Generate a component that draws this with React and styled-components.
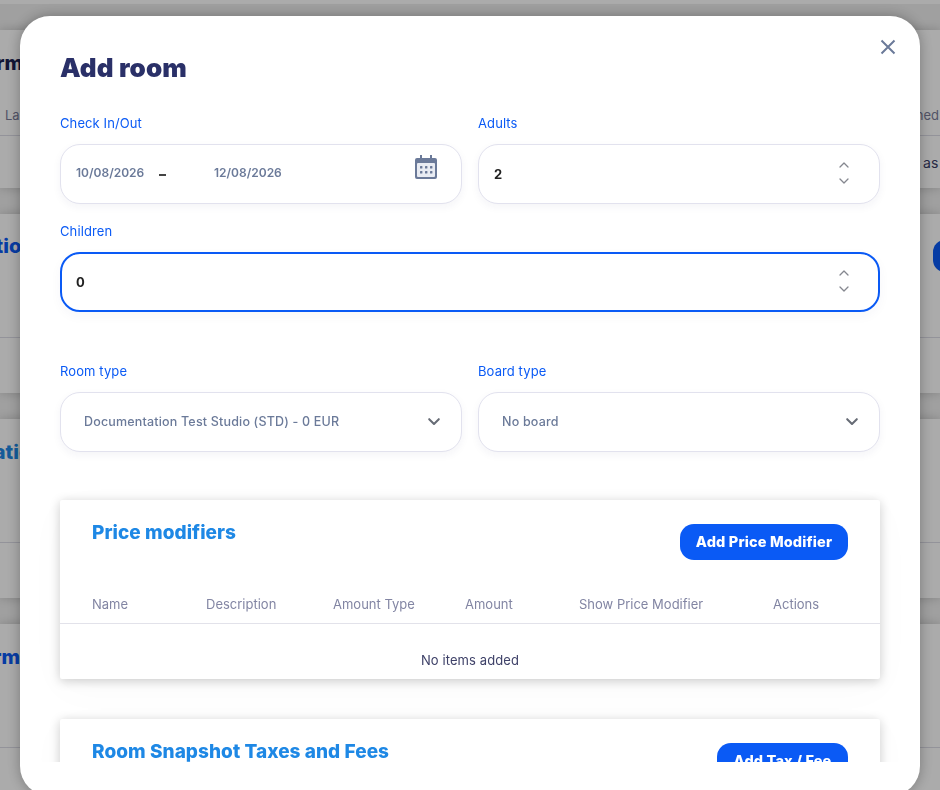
import React from "react";
import styled, { createGlobalStyle } from "styled-components";

const Global = createGlobalStyle`
  html, body { margin: 0; padding: 0; height: 100%; overflow: hidden; background: #efefef; }
  body { font-family: Inter, "Noto Sans", "Liberation Sans", sans-serif; }
  * { box-sizing: border-box; }
`;

const Page = styled.div`
  height: 790px;
  overflow: hidden;
  padding-top: 4px;
  display: flex;
  flex-direction: column;
  gap: 26px;
  box-shadow: inset 0 4px 0 #fff;
`;
const BackCard = styled.section`
  flex: none;
  height: ${p => p.$h}px;
  background: #fff;
  box-shadow: 0 0 10px rgba(0,0,0,.2);
  &:first-child { margin-top: 26px; }
`;
const BackHead = styled.div`
  height: ${p => p.$h}px;
  border-bottom: 1px solid #dcdce6;
  display: flex;
  justify-content: space-between;
  position: relative;
`;
const BackLeft = styled.div`
  width: ${p => p.$w}px;
  display: flex;
  flex-direction: column;
  align-items: flex-end;
  padding-top: ${p => p.$top}px;
`;
const BackTitle = styled.div`
  font-size: 20px;
  line-height: 24px;
  font-weight: 800;
  white-space: nowrap;
  color: ${p => p.$c};
`;
const BackCol = styled.div`
  position: absolute;
  top: 77px;
  left: 5px;
  font-size: 13px;
  line-height: 16px;
  color: #7a7c99;
  white-space: nowrap;
`;
const BackColRight = styled(BackCol)`
  left: 882px;
`;
const BackCell = styled.div`
  padding: 18px 0 0 874px;
  font-size: 14px;
  line-height: 18px;
  color: #3a3d66;
  white-space: nowrap;
  overflow: hidden;
`;
const BackButton = styled.div`
  position: absolute;
  left: 933px;
  top: 26px;
  width: 60px;
  height: 32px;
  border-radius: 12px;
  background: #0a5af5;
`;

const Backdrop = styled.div`
  position: fixed;
  inset: 0;
  background: rgba(0,0,0,.33);
`;
const Modal = styled.div`
  position: fixed;
  left: 20px;
  top: 16px;
  width: 900px;
  height: 780px;
  background: #fff;
  border-radius: 30px;
  box-shadow: 0 0 14px rgba(0,0,0,.3);
  padding-top: 37px;
`;
const Heading = styled.h2`
  margin: 0 0 32px 40px;
  font-size: 26px;
  line-height: 30px;
  font-weight: 900;
  letter-spacing: .15px;
  color: #2a3068;
`;
const CloseButton = styled.button`
  position: absolute;
  right: 24px;
  top: 23px;
  width: 16px;
  height: 16px;
  padding: 0;
  border: 0;
  background: none;
  display: flex;
`;
const Scroll = styled.div`
  height: 647px;
  overflow: hidden;
  padding: 0 40px;
`;
const Row = styled.div`
  display: grid;
  grid-template-columns: 1fr 1fr;
  gap: 16px;
  margin-top: ${p => p.$top || 0}px;
`;
const Field = styled.div`
  grid-column: ${p => (p.$full ? "1 / -1" : "auto")};
`;
const Label = styled.div`
  font-size: 13px;
  line-height: 16px;
  font-weight: 400;
  letter-spacing: .1px;
  color: #0a5af5;
  margin-bottom: 13px;
`;
const Control = styled.div`
  height: 60px;
  border-radius: 20px;
  background: #fff;
  border: ${p => (p.$focus ? "2px solid #0a5af5" : "1px solid #e2e2ee")};
  box-shadow: ${p => (p.$focus ? "0 4px 12px rgba(40,40,90,.04)" : "0 3px 8px rgba(40,40,90,.05)")};
  padding: 0 ${p => p.$pr ?? 20}px 0 ${p => (p.$focus ? p.$pl - 1 : p.$pl)}px;
  display: flex;
  align-items: center;
  justify-content: space-between;
`;
const NumberValue = styled.span`
  font-size: 13px;
  font-weight: 700;
  color: #222;
`;
const Spinner = styled.div`
  display: flex;
  flex-direction: column;
  gap: 10px;
  margin-top: -2px;
  color: #85878f;
`;
const DateGroup = styled.div`
  display: flex;
  align-items: center;
  margin-top: -3px;
`;
const DateText = styled.span`
  font-size: 12px;
  font-weight: 600;
  color: #6b7a99;
  width: ${p => p.$w}px;
`;
const Dash = styled.span`
  width: 7px;
  height: 2px;
  margin: 5px 48px 0 15px;
  background: #444;
`;
const SelectText = styled.span`
  font-size: 12.5px;
  font-weight: 500;
  letter-spacing: .18px;
  color: #6b7a99;
  margin-top: -2px;
`;
const Panel = styled.section`
  background: #fff;
  border-radius: 2px;
  margin-top: ${p => p.$top}px;
  box-shadow: 0 2px 11px rgba(0,0,0,.2), 0 10px 44px rgba(0,0,0,.025);
`;
const PanelHead = styled.div`
  display: flex;
  justify-content: space-between;
  align-items: flex-start;
  padding: 24px 32px 0;
`;
const PanelTitle = styled.h3`
  margin: 0;
  font-size: 19px;
  line-height: 18px;
  font-weight: 800;
  letter-spacing: .05px;
  color: #1e88e5;
`;
const AddButton = styled.button`
  height: 36px;
  width: ${p => p.$w}px;
  border: 0;
  border-radius: 14px;
  background: #0a5af5;
  color: #fff;
  font: 800 14.5px/36px Inter, sans-serif;
  letter-spacing: .15px;
  padding: 0;
  white-space: nowrap;
`;
const Columns = styled.div`
  display: grid;
  grid-template-columns: 114px 127px 132px 114px 194px 1fr;
  padding: 36px 32px 11px;
  border-bottom: 1px solid #e2e2ea;
  font-size: 13px;
  line-height: 16px;
  color: #8285a3;
`;
const Empty = styled.div`
  padding: 28px 0 11px;
  text-align: center;
  font-size: 13px;
  line-height: 16px;
  letter-spacing: .1px;
  color: #3e4168;
`;
const SelectArrow = styled.span`
  color: #666b75;
  display: flex;
`;

const Chevron = ({ up, w = 10, sw = 1.3 }) => (
  <svg width={w} height={w * 0.6} viewBox="0 0 10 6" fill="none" stroke="currentColor" strokeWidth={sw} strokeLinecap="round" strokeLinejoin="round" style={{ display: "block", overflow: "visible" }}>
    <path d={up ? "M1 5 5 1 9 5" : "M1 1 5 5 9 1"} />
  </svg>
);

const Arrows = () => (
  <Spinner>
    <Chevron up />
    <Chevron />
  </Spinner>
);

const Calendar = () => (
  <svg width="22" height="24" viewBox="0 0 22 24" style={{ display: "block", marginTop: -14 }}>
    <path d="M5 0h2v3h8V0h2v3h3a2 2 0 0 1 2 2v17a2 2 0 0 1-2 2H2a2 2 0 0 1-2-2V5a2 2 0 0 1 2-2h3z" fill="#6b7a99" />
    <rect x="2" y="8" width="18" height="14" rx="1" fill="#e9ecf3" />
    {[5, 10, 15].map(x => [11, 16].map(y => <rect key={x + "-" + y} x={x} y={y} width="2.4" height="2.4" rx=".5" fill="#6b7a99" />))}
  </svg>
);

export default function App() {
  return (
    <>
      <Global />
      <Page>
        <BackCard $h={158}>
          <BackHead $h={106}>
            <BackLeft $w={23} $top={21}><BackTitle $c="#1c2150">Confirm</BackTitle></BackLeft>
            <BackCol>Last</BackCol>
            <BackColRight>Assigned</BackColRight>
          </BackHead>
          <BackCell>Shown as</BackCell>
        </BackCard>
        <BackCard $h={179}>
          <BackHead $h={124}>
            <BackLeft $w={34} $top={20}><BackTitle $c="#0a5af5">Relation</BackTitle></BackLeft>
            <BackButton />
          </BackHead>
        </BackCard>
        <BackCard $h={179}>
          <BackHead $h={124}>
            <BackLeft $w={44} $top={21}><BackTitle $c="#1e88e5">Relation</BackTitle></BackLeft>
          </BackHead>
        </BackCard>
        <BackCard $h={179}>
          <BackHead $h={124}>
            <BackLeft $w={20} $top={21}><BackTitle $c="#0a5af5">Confirm</BackTitle></BackLeft>
          </BackHead>
        </BackCard>
      </Page>
      <Backdrop />
      <Modal>
        <CloseButton aria-label="Close">
          <svg width="16" height="16" viewBox="0 0 16 16" fill="none" stroke="#6b7a99" strokeWidth="2">
            <path d="M1.5 1.5 14.5 14.5M14.5 1.5 1.5 14.5" />
          </svg>
        </CloseButton>
        <Heading>Add room</Heading>
        <Scroll>
          <Row>
            <Field>
              <Label>Check In/Out</Label>
              <Control $pl={15} $pr={24}>
                <DateGroup>
                  <DateText $w={68}>10/08/2026</DateText>
                  <Dash />
                  <DateText $w={68}>12/08/2026</DateText>
                </DateGroup>
                <Calendar />
              </Control>
            </Field>
            <Field>
              <Label>Adults</Label>
              <Control $pl={15} $pr={30}>
                <NumberValue>2</NumberValue>
                <Arrows />
              </Control>
            </Field>
          </Row>
          <Row $top={19}>
            <Field $full>
              <Label>Children</Label>
              <Control $focus $pl={15} $pr={29}>
                <NumberValue>0</NumberValue>
                <Arrows />
              </Control>
            </Field>
          </Row>
          <Row $top={51}>
            <Field>
              <Label>Room type</Label>
              <Control $pl={23} $pr={21}>
                <SelectText>Documentation Test Studio (STD) - 0 EUR</SelectText>
                <SelectArrow><Chevron w={12} sw={1.7} /></SelectArrow>
              </Control>
            </Field>
            <Field>
              <Label>Board type</Label>
              <Control $pl={23} $pr={21}>
                <SelectText>No board</SelectText>
                <SelectArrow><Chevron w={12} sw={1.7} /></SelectArrow>
              </Control>
            </Field>
          </Row>
          <Panel $top={48}>
            <PanelHead>
              <PanelTitle>Price modifiers</PanelTitle>
              <AddButton $w={168}>Add Price Modifier</AddButton>
            </PanelHead>
            <Columns>
              <span>Name</span>
              <span>Description</span>
              <span>Amount Type</span>
              <span>Amount</span>
              <span>Show Price Modifier</span>
              <span>Actions</span>
            </Columns>
            <Empty>No items added</Empty>
          </Panel>
          <Panel $top={40}>
            <PanelHead>
              <PanelTitle>Room Snapshot Taxes and Fees</PanelTitle>
              <AddButton $w={131}>Add Tax / Fee</AddButton>
            </PanelHead>
          </Panel>
        </Scroll>
      </Modal>
    </>
  );
}
